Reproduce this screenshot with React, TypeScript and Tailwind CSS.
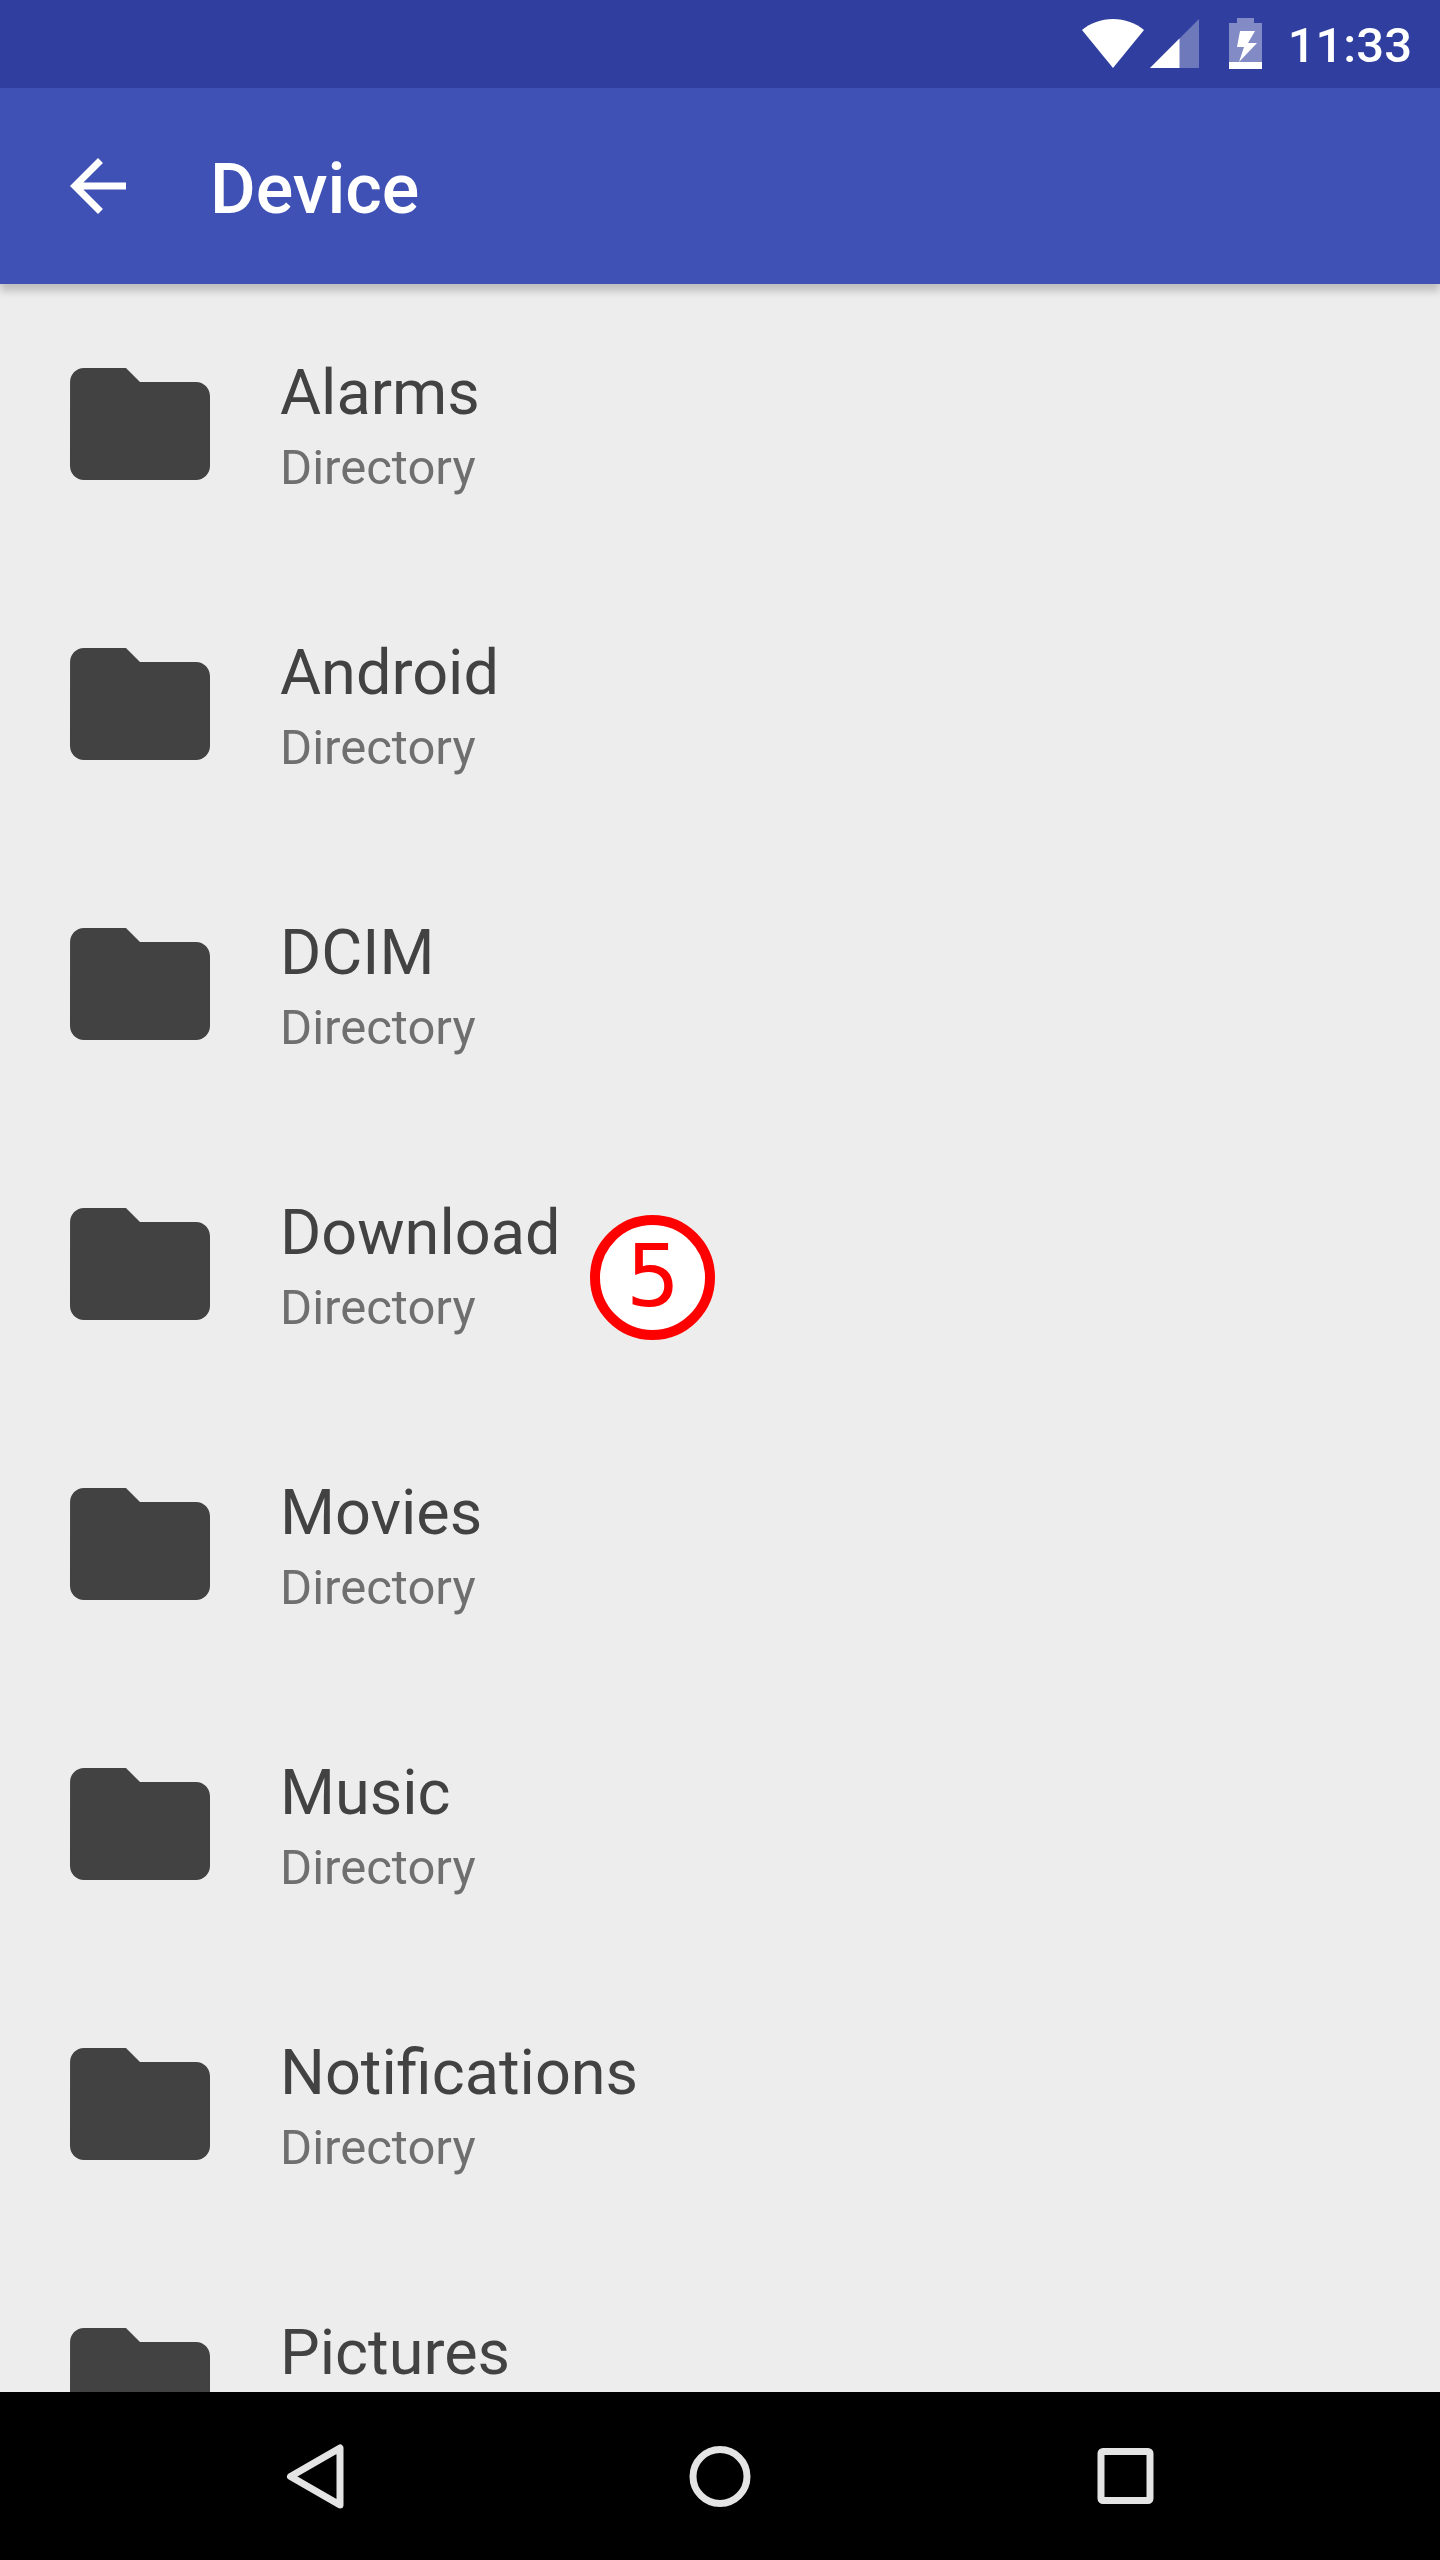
type Entry = { name: string; kind: string; step?: number };

const entries: Entry[] = [
  { name: "Alarms", kind: "Directory" },
  { name: "Android", kind: "Directory" },
  { name: "DCIM", kind: "Directory" },
  { name: "Download", kind: "Directory", step: 5 },
  { name: "Movies", kind: "Directory" },
  { name: "Music", kind: "Directory" },
  { name: "Notifications", kind: "Directory" },
  { name: "Pictures", kind: "Directory" },
];

function StatusBar() {
  return (
    <div className="flex h-[88px] shrink-0 items-center justify-end bg-[#303f9f] pr-7 text-white">
      <svg className="h-[50px] w-[62px]" viewBox="0 0 62 50" fill="currentColor" aria-label="Wi-Fi">
        <path d="M31 49 0 11C8.500 4 19 0 31 0S53.500 4 62 11Z" />
      </svg>
      <svg className="ml-1.5 h-[50px] w-[49px]" viewBox="0 0 49 50" fill="currentColor" aria-label="Signal">
        <path d="M0 49 49 0V49Z" fillOpacity="0.3" />
        <path d="M0 49 29.500 19.500V49Z" />
      </svg>
      <svg className="ml-[30px] h-[52px] w-[33px]" viewBox="0 0 33 52" fill="currentColor" aria-label="Battery charging">
        <path d="M8 0H25V5H33V44H0V5H8Z" fillOpacity="0.4" />
        <path d="M0 44H33V51H0Z" />
        <path d="M11 13H26L19 25H28L10 44 15 29H8Z" />
      </svg>
      <time className="mt-1 ml-[26px] text-[49px] leading-[58px] font-medium">11:33</time>
    </div>
  );
}

function AppBar() {
  return (
    <header className="z-10 flex h-[196px] shrink-0 items-center bg-[#3f51b5] px-14 text-white shadow-[0_7px_8px_rgba(0,0,0,0.2)]">
      <button type="button" aria-label="Back" className="size-[84px]">
        <svg className="size-[84px]" viewBox="0 0 24 24" fill="currentColor">
          <path d="M20 11H7.830l5.590-5.590L12 4l-8 8 8 8 1.410-1.410L7.830 13H20v-2z" />
        </svg>
      </button>
      <h1 className="mt-1.5 ml-[70px] text-[70px] leading-[82px] font-medium">Device</h1>
    </header>
  );
}

function EntryRow({ name, kind, step }: Entry) {
  return (
    <li>
      <button type="button" className="flex h-[280px] w-full items-center px-14 text-left">
        <svg className="size-[168px] shrink-0 text-[#424242]" viewBox="0 0 24 24" fill="currentColor">
          <path d="M10 4H4c-1.100 0-1.990.9-1.990 2L2 18c0 1.100.9 2 2 2h16c1.100 0 2-.9 2-2V8c0-1.100-.9-2-2-2h-8l-2-2z" />
        </svg>
        <span className="mt-3.5 ml-14 flex flex-col">
          <span className="text-[63px] leading-[74px] text-[#424242]">{name}</span>
          <span className="text-[49px] leading-[76px] text-[#6f6f6f]">{kind}</span>
        </span>
        {step !== undefined && (
          <span className="mt-[26px] ml-[30px] flex size-[125px] items-center justify-center rounded-full border-[10px] border-[#ff0000] bg-white font-['DejaVu_Sans',sans-serif] text-[85px] leading-[100px] text-[#ff0000]">
            {step}
          </span>
        )}
      </button>
    </li>
  );
}

function NavigationBar() {
  return (
    <nav className="flex h-[168px] shrink-0 items-center bg-black px-28 text-[#e4e4e4]">
      <button type="button" aria-label="Back" className="flex h-full flex-1 items-center justify-center">
        <svg className="size-[84px]" viewBox="0 0 84 84" fill="none" stroke="currentColor" strokeWidth="7" strokeLinejoin="round">
          <path d="M67 14V71L17.500 42.500Z" />
        </svg>
      </button>
      <button type="button" aria-label="Home" className="flex h-full flex-1 items-center justify-center">
        <svg className="size-[84px]" viewBox="0 0 84 84" fill="none" stroke="currentColor" strokeWidth="7">
          <circle cx="42" cy="42.500" r="27" />
        </svg>
      </button>
      <button type="button" aria-label="Recent apps" className="flex h-full flex-1 items-center justify-center">
        <svg className="size-[84px]" viewBox="0 0 84 84" fill="none" stroke="currentColor" strokeWidth="7">
          <rect x="18" y="17.500" width="49" height="49" rx="2" />
        </svg>
      </button>
    </nav>
  );
}

export default function App() {
  return (
    <div className="flex h-screen flex-col overflow-hidden bg-[#ededed] font-['Roboto',sans-serif]">
      <StatusBar />
      <AppBar />
      <main className="min-h-0 flex-1 overflow-y-auto [scrollbar-width:none]">
        <ul>
          {entries.map((entry) => (
            <EntryRow key={entry.name} {...entry} />
          ))}
        </ul>
      </main>
      <NavigationBar />
    </div>
  );
}
